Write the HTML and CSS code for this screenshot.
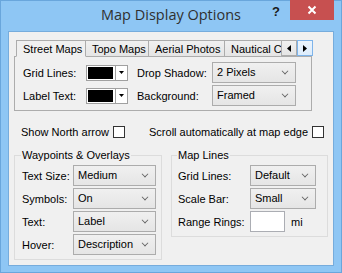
FILE: index.html
```html
<!DOCTYPE html>
<html lang="en">
<head>
  <meta charset="UTF-8">
  <title>Map Display Options</title>
  <link rel="stylesheet" href="styles.css">
</head>
<body>
  <div class="window">
    <div class="titlebar">
      <span></span>
      <span class="title">Map Display Options</span>
      <div class="caption-btns">
        <span class="help">?</span>
        <span class="close">
          <svg width="10" height="10" viewBox="0 0 10 10"><path d="M1.5 1.5 L8.5 8.5 M8.5 1.5 L1.5 8.5" stroke="#fff" stroke-width="2"/></svg>
        </span>
      </div>
    </div>

    <div class="client">
      <div class="tabs">
        <div class="tab selected">Street Maps</div>
        <div class="tab">Topo Maps</div>
        <div class="tab">Aerial Photos</div>
        <div class="tab clipped">Nautical Charts</div>
        <div class="tab-scroll">
          <span class="spin"><svg width="4" height="7" viewBox="0 0 4 7"><path d="M4 0 L0 3.5 L4 7 Z" fill="#000"/></svg></span>
          <span class="spin hot"><svg width="4" height="7" viewBox="0 0 4 7"><path d="M0 0 L4 3.5 L0 7 Z" fill="#000"/></svg></span>
        </div>
      </div>
      <div class="panel">
        <div class="panel-grid">
          <label>Grid Lines:</label>
          <div class="colorpick"><span class="swatch"></span><span class="drop"><svg width="5" height="3" viewBox="0 0 5 3"><path d="M0 0 H5 L2.5 3 Z" fill="#000"/></svg></span></div>
          <label class="lbl2">Drop Shadow:</label>
          <div class="select">2 Pixels</div>

          <label>Label Text:</label>
          <div class="colorpick"><span class="swatch"></span><span class="drop"><svg width="5" height="3" viewBox="0 0 5 3"><path d="M0 0 H5 L2.5 3 Z" fill="#000"/></svg></span></div>
          <label class="lbl2">Background:</label>
          <div class="select">Framed</div>
        </div>
      </div>

      <div class="checks">
        <div class="check">Show North arrow <span class="box"></span></div>
        <div class="check">Scroll automatically at map edge <span class="box"></span></div>
      </div>

      <div class="groups">
        <fieldset class="group left">
          <legend>Waypoints &amp; Overlays</legend>
          <div class="rows">
            <label>Text Size:</label><div class="select">Medium</div>
            <label>Symbols:</label><div class="select">On</div>
            <label>Text:</label><div class="select">Label</div>
            <label>Hover:</label><div class="select">Description</div>
          </div>
        </fieldset>
        <fieldset class="group right">
          <legend>Map Lines</legend>
          <div class="rows">
            <label>Grid Lines:</label><div class="select">Default</div>
            <label>Scale Bar:</label><div class="select">Small</div>
            <label>Range Rings:</label><div class="ring"><span class="input"></span><span class="unit">mi</span></div>
          </div>
        </fieldset>
      </div>
    </div>
  </div>
</body>
</html>
```

FILE: styles.css
```css
html, body {
  margin: 0;
  padding: 0;
}
body {
  font-family: "Liberation Sans", Arial, sans-serif;
  font-size: 11px;
  color: #000;
  background: #8ec6f4;
}
.window {
  width: 342px;
  height: 273px;
  box-sizing: border-box;
  background: #8ec6f4;
  box-shadow: inset 0 0 0 1px #69a6dc;
  overflow: hidden;
}
.titlebar {
  height: 31px;
  display: grid;
  grid-template-columns: 1fr auto 1fr;
  align-items: start;
}
.title {
  font-family: "Open Sans", sans-serif;
  font-size: 14.5px;
  color: #303030;
  line-height: 20px;
  padding-top: 5px;
}
.caption-btns {
  display: flex;
  justify-content: flex-end;
  margin-right: 8px;
}
.help {
  font-family: "Liberation Sans", sans-serif;
  font-weight: bold;
  font-size: 13px;
  color: #1a1a1a;
  line-height: 16px;
  padding-top: 4px;
  margin-right: 10px;
}
.close {
  width: 44px;
  height: 20px;
  background: #c75050;
  display: flex;
  align-items: center;
  justify-content: center;
}
.client {
  margin: 0 8px 7px 8px;
  height: 235px;
  box-sizing: border-box;
  border: 1px solid #76acdc;
  background: #f0f0f0;
  padding-top: 8px;
}

/* tabs */
.tabs {
  display: flex;
  margin-left: 7px;
  height: 17px;
  position: relative;
  z-index: 1;
}
.tab {
  box-sizing: border-box;
  height: 17px;
  border: 1px solid #acacac;
  border-left: none;
  background: linear-gradient(#f0f0f0, #e5e5e5);
  padding: 0 6px;
  line-height: 16px;
  white-space: nowrap;
}
.tab.selected {
  border-left: 1px solid #acacac;
  width: 70px;
  background: #f0f0f0;
  border-bottom-color: #f0f0f0;
}
.tab:nth-child(2) { width: 63px; }
.tab:nth-child(3) { width: 76px; }
.tab.clipped {
  width: 56px;
  overflow: hidden;
  border-right: none;
  padding-right: 0;
}
.tab-scroll {
  display: flex;
}
.spin {
  box-sizing: border-box;
  width: 16px;
  height: 16px;
  border: 1px solid #acacac;
  background: linear-gradient(#f0f0f0, #e5e5e5);
  display: flex;
  align-items: center;
  justify-content: center;
}
.spin.hot {
  border-color: #7eb4ea;
  background: linear-gradient(#ecf4fc, #dcecfc);
}
.panel {
  margin-left: 5px;
  width: 298px;
  height: 55px;
  box-sizing: border-box;
  border: 1px solid #acacac;
  margin-top: -1px;
  background: #f0f0f0;
  padding: 5px 0 0 8px;
}
.panel-grid {
  display: grid;
  grid-template-columns: 63px 42px 84px 84px;
  grid-auto-rows: 21px;
  row-gap: 2px;
  align-items: center;
}
label {
  white-space: nowrap;
}
.lbl2 {
  padding-left: 9px;
}
.colorpick {
  box-sizing: border-box;
  width: 42px;
  height: 16px;
  border: 1px solid #a0a0a0;
  background: #fff;
  display: flex;
}
.swatch {
  width: 25px;
  margin: 1px 2px 1px 1px;
  background: #000;
}
.drop {
  flex: 1;
  border-left: 1px solid #a0a0a0;
  display: flex;
  align-items: center;
  justify-content: center;
}

/* combo boxes */
.select {
  box-sizing: border-box;
  height: 21px;
  border: 1px solid #acacac;
  background: linear-gradient(#f0f0f0, #e5e5e5);
  padding-left: 4px;
  line-height: 19px;
  display: flex;
  justify-content: space-between;
  align-items: center;
}
.select::after {
  content: "";
  width: 5px;
  height: 5px;
  margin-right: 7px;
  margin-top: -4px;
  border-right: 1.5px solid #606060;
  border-bottom: 1.5px solid #606060;
  transform: rotate(45deg) scale(0.8, 0.8);
}

/* checkboxes */
.checks {
  display: flex;
  justify-content: space-between;
  padding: 0 9px 0 12px;
  margin-top: 14px;
  height: 14px;
}
.check {
  display: flex;
  align-items: center;
  gap: 4px;
  line-height: 14px;
}
.box {
  width: 12px;
  height: 12px;
  box-sizing: border-box;
  border: 1px solid #333;
  background: #fff;
}

/* group boxes */
.groups {
  display: flex;
  align-items: flex-start;
  margin: 10px 0 0 5px;
  gap: 9px;
}
.group {
  margin: 0;
  border: 1px solid #dcdcdc;
  min-width: 0;
}
.group legend {
  padding: 0 1px;
  line-height: 13px;
}
.group.left {
  width: 148px;
  box-sizing: border-box;
  padding: 3px 5px 4px 7px;
}
.group.left legend {
  margin-left: -1px;
}
.group.right {
  width: 157px;
  box-sizing: border-box;
  padding: 3px 11px 4px 6px;
}
.group.right legend {
  margin-left: -1px;
}
.rows {
  display: grid;
  grid-auto-rows: 21px;
  row-gap: 2px;
  align-items: center;
}
.left .rows {
  grid-template-columns: 51px 83px;
}
.right .rows {
  grid-template-columns: 72px 66px;
}
.ring {
  display: flex;
  align-items: center;
}
.input {
  width: 35px;
  height: 21px;
  box-sizing: border-box;
  border: 1px solid #abadb3;
  background: #fff;
}
.unit {
  margin-left: 6px;
}
```
